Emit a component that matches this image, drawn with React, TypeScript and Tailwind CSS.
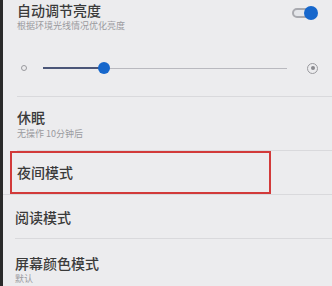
export default function App() {
  return (
    <div
      className="flex w-[332px] h-[286px] overflow-hidden bg-[#ececee]"
      style={{ fontFamily: '"Noto Sans CJK SC", "Noto Sans", sans-serif' }}
    >
      <div className="w-[3px] shrink-0 bg-[#2a2a2a]" />
      <div className="flex-1 flex flex-col">
        {/* auto brightness */}
        <div className="h-[97px] flex flex-col border-b border-[#d9d9dc] ml-[14px] pt-[2px]">
          <div className="flex items-start justify-between">
            <div className="flex flex-col">
              <span className="text-[14px] leading-[17px] text-[#3a3a3a] font-medium">自动调节亮度</span>
              <span className="text-[9px] leading-[12px] mt-[1px] text-[#9a9a9e]">根据环境光线情况优化亮度</span>
            </div>
            <div className="mt-[4px] mr-[14px] relative w-[26px] h-[14px]">
              <div className="absolute left-0 top-[2px] w-[24px] h-[10px] rounded-full border-2 border-[#a9aab0] bg-[#e4e6ea]" />
              <div className="absolute right-0 top-0 w-[14px] h-[14px] rounded-full bg-[#1667cc]" />
            </div>
          </div>
          <div className="flex items-center mt-[30px] pr-[14px]">
            <div className="w-[6px] h-[6px] rounded-full border-[1.5px] border-[#9a9a9e] ml-[4px]" />
            <div className="flex-1 flex items-center ml-[16px] mr-[20px]">
              <div className="w-[61px] h-[2px] bg-[#4b5678]" />
              <div className="w-[12px] h-[12px] rounded-full bg-[#1667cc] -ml-[6px] -mr-[6px] z-10" />
              <div className="flex-1 h-[1px] bg-[#b9b9bf]" />
            </div>
            <div className="w-[11px] h-[11px] rounded-full border-[1.5px] border-[#9a9a9e] flex items-center justify-center">
              <div className="w-[4px] h-[4px] rounded-full bg-[#8a8a8e]" />
            </div>
          </div>
        </div>

        {/* sleep */}
        <div className="h-[54px] flex flex-col justify-center border-b border-[#d9d9dc] ml-[14px] pt-[2px]">
          <span className="text-[14px] leading-[17px] text-[#3a3a3a] font-medium">休眠</span>
          <span className="text-[9px] leading-[12px] mt-[2px] text-[#9a9a9e]">无操作 10分钟后</span>
        </div>

        {/* night mode */}
        <div className="h-[44px] flex border-b border-[#d9d9dc]">
          <div className="w-[261px] ml-[7px] border-2 border-[#d23a3a] flex items-center pl-[5px]">
            <span className="text-[14px] leading-[17px] text-[#3a3a3a] font-medium">夜间模式</span>
          </div>
        </div>

        {/* reading mode */}
        <div className="h-[44px] flex items-center border-b border-[#d9d9dc] ml-[12px]">
          <span className="text-[14px] leading-[17px] text-[#3a3a3a] font-medium mt-[1px]">阅读模式</span>
        </div>

        {/* screen colour mode */}
        <div className="flex flex-col ml-[12px] pt-[16px]">
          <span className="text-[14px] leading-[17px] text-[#3a3a3a] font-medium">屏幕颜色模式</span>
          <span className="text-[9px] leading-[12px] mt-[1px] text-[#9a9a9e]">默认</span>
        </div>
      </div>
    </div>
  );
}
